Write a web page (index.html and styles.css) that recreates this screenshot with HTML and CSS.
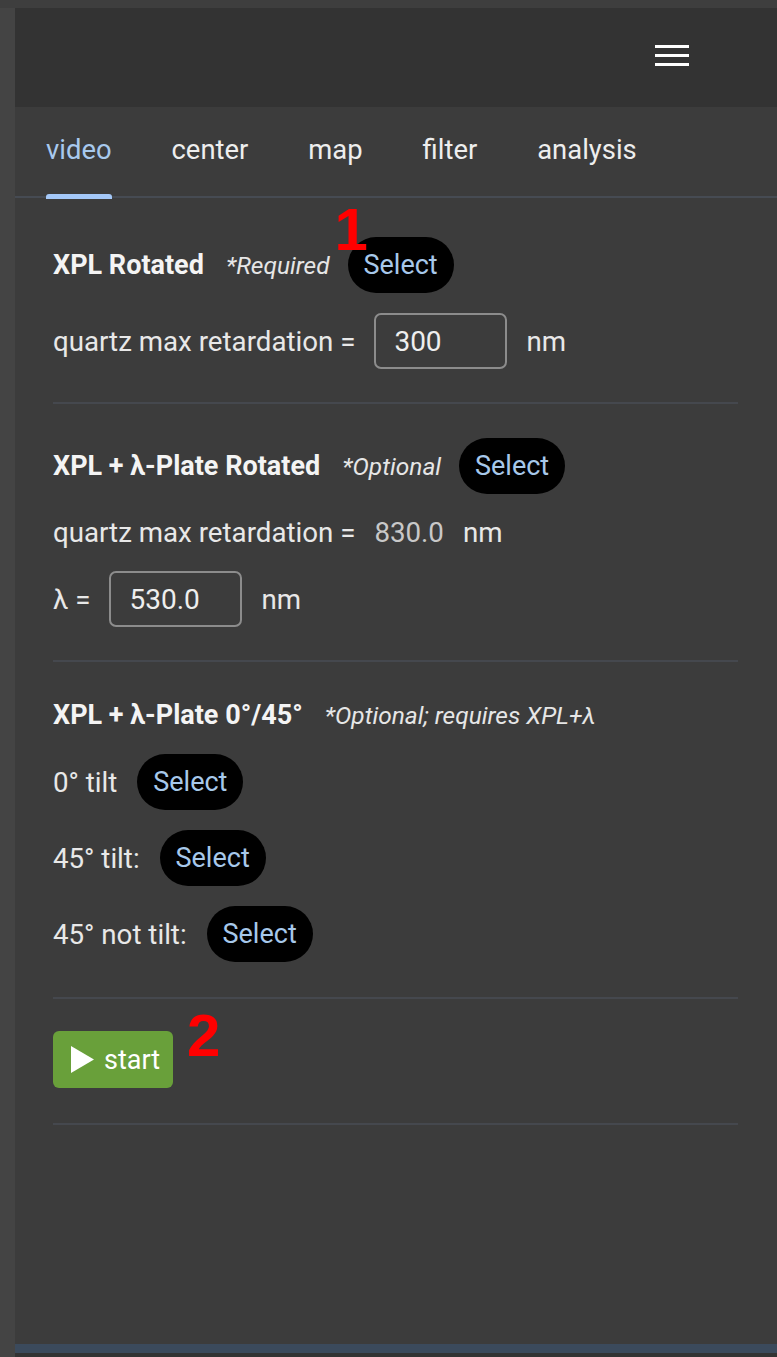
FILE: index.html
```html
<!DOCTYPE html>
<html>
<head>
<meta charset="utf-8">
<link rel="stylesheet" href="styles.css">
</head>
<body>
<div class="app">
  <div class="rail"></div>
  <div class="main">
    <header class="topbar">
      <button class="menu" aria-label="menu">
        <span></span><span></span><span></span>
      </button>
    </header>
    <nav class="tabs">
      <span class="tab active">video</span>
      <span class="tab">center</span>
      <span class="tab">map</span>
      <span class="tab">filter</span>
      <span class="tab">analysis</span>
    </nav>
    <div class="content">
      <section class="block first">
        <div class="row head">
          <span class="title">XPL Rotated</span>
          <span class="note">*Required</span>
          <span class="select-wrap">
            <span class="marker m1">1</span>
            <button class="select">Select</button>
          </span>
        </div>
        <div class="row">
          <span class="label">quartz max retardation =</span>
          <span class="input">300</span>
          <span class="label">nm</span>
        </div>
      </section>
      <section class="block">
        <div class="row head">
          <span class="title">XPL + λ-Plate Rotated</span>
          <span class="note">*Optional</span>
          <button class="select">Select</button>
        </div>
        <div class="row text">
          <span class="label">quartz max retardation =</span>
          <span class="value">830.0</span>
          <span class="label">nm</span>
        </div>
        <div class="row">
          <span class="label">λ =</span>
          <span class="input">530.0</span>
          <span class="label">nm</span>
        </div>
      </section>
      <section class="block tilt-block">
        <div class="row text">
          <span class="title">XPL + λ-Plate 0°/45°</span>
          <span class="note">*Optional; requires XPL+λ</span>
        </div>
        <div class="row">
          <span class="label">0° tilt</span>
          <button class="select">Select</button>
        </div>
        <div class="row">
          <span class="label">45° tilt:</span>
          <button class="select">Select</button>
        </div>
        <div class="row">
          <span class="label">45° not tilt:</span>
          <button class="select">Select</button>
        </div>
      </section>
      <section class="block start-block">
        <div class="row">
          <span class="select-wrap">
            <button class="start">
              <svg class="play" width="23" height="27" viewBox="0 0 23 27"><polygon points="0,0 23,13.5 0,27" fill="#ffffff"/></svg>
              <span>start</span>
            </button>
            <span class="marker m2">2</span>
          </span>
        </div>
      </section>
    </div>
    <div class="footer-strip"></div>
    <div class="footer-base"></div>
  </div>
</div>
</body>
</html>
```

FILE: styles.css
```css
* { box-sizing: border-box; }
html, body {
  margin: 0;
  padding: 0;
  background: #3e3e3e;
  font-family: "Roboto", "Liberation Sans", sans-serif;
  color: #eeeeee;
}
.app {
  display: flex;
  height: 1357px;
  padding-top: 8px;
}
.rail {
  width: 15px;
  background: #444444;
  flex: none;
}
.main {
  flex: 1;
  display: flex;
  flex-direction: column;
  background: #3c3c3c;
}
.topbar {
  height: 99px;
  background: #333333;
  display: flex;
  align-items: center;
  justify-content: flex-end;
  padding-right: 88px;
  flex: none;
}
.menu {
  background: none;
  border: 0;
  padding: 0;
  width: 34px;
  display: flex;
  flex-direction: column;
  gap: 6px;
  margin-top: -4px;
}
.menu span {
  display: block;
  height: 3px;
  background: #ffffff;
}
.tabs {
  height: 91px;
  display: flex;
  align-items: stretch;
  padding-left: 31px;
  border-bottom: 2px solid #464b53;
  flex: none;
}
.tab {
  font-size: 27.4px;
  color: #eeeeee;
  margin-right: 60px;
  display: flex;
  align-items: center;
  position: relative;
  padding-bottom: 4px;
}
.tab.active { color: #a8c9ee; }
.tab.active::after {
  content: "";
  position: absolute;
  left: 0;
  right: 0;
  bottom: -3px;
  height: 5px;
  border-radius: 3px 3px 0 0;
  background: #a4c8f8;
}
.content {
  flex: 1;
  padding: 0 39px 0 38px;
}
.block {
  display: flex;
  flex-direction: column;
  gap: 20px;
  padding: 34px 0 33px;
  border-bottom: 2px solid #45484e;
}
.block.first { padding-top: 39px; }
.block.tilt-block { padding-bottom: 35px; }
.block.start-block { padding: 32px 0 35px; }
.row {
  display: flex;
  align-items: center;
  min-height: 56px;
}
.row.text { min-height: 37px; }
.tilt-block .row.text { min-height: 38px; }
.title {
  font-size: 27px;
  font-weight: 700;
  color: #f4f4f4;
  margin-right: 22px;
}
.note {
  font-size: 24.5px;
  font-style: italic;
  color: #e6e6e6;
  margin-right: 18px;
}
.label {
  font-size: 27.7px;
  color: #e8e8e8;
}
.value {
  font-size: 27.7px;
  color: #c8c8c8;
  margin: 0 19px 0 19px;
}
.input {
  width: 133px;
  height: 56px;
  border: 2px solid #8c8c8c;
  border-radius: 7px;
  font-size: 28px;
  color: #eeeeee;
  padding-left: 18px;
  display: flex;
  align-items: center;
  margin: 0 19px 0 19px;
}
.select-wrap {
  position: relative;
  display: inline-flex;
}
.select {
  height: 56px;
  width: 106px;
  border-radius: 28px;
  border: 0;
  background: #000000;
  color: #a7c8ea;
  font-family: "Roboto", "Liberation Sans", sans-serif;
  font-size: 27px;
  padding: 0;
}
.row .label + .select { margin-left: 20px; }
.start {
  height: 57px;
  width: 120px;
  border: 0;
  border-radius: 6px;
  background: #69a03a;
  color: #ffffff;
  display: flex;
  align-items: center;
  padding: 0 0 0 18px;
  gap: 10px;
  font-family: "Roboto", "Liberation Sans", sans-serif;
  font-size: 27px;
}
.marker {
  position: absolute;
  font-family: "Liberation Sans", Arial, sans-serif;
  font-weight: 700;
  font-size: 60px;
  color: #ff0000;
  line-height: 1;
}
.m1 { left: -13px; top: -37px; }
.m2 { left: 134px; top: -25px; }
.footer-strip {
  height: 9px;
  background: #3b4a5c;
  flex: none;
}
.footer-base {
  height: 4px;
  background: #333333;
  flex: none;
}
```
